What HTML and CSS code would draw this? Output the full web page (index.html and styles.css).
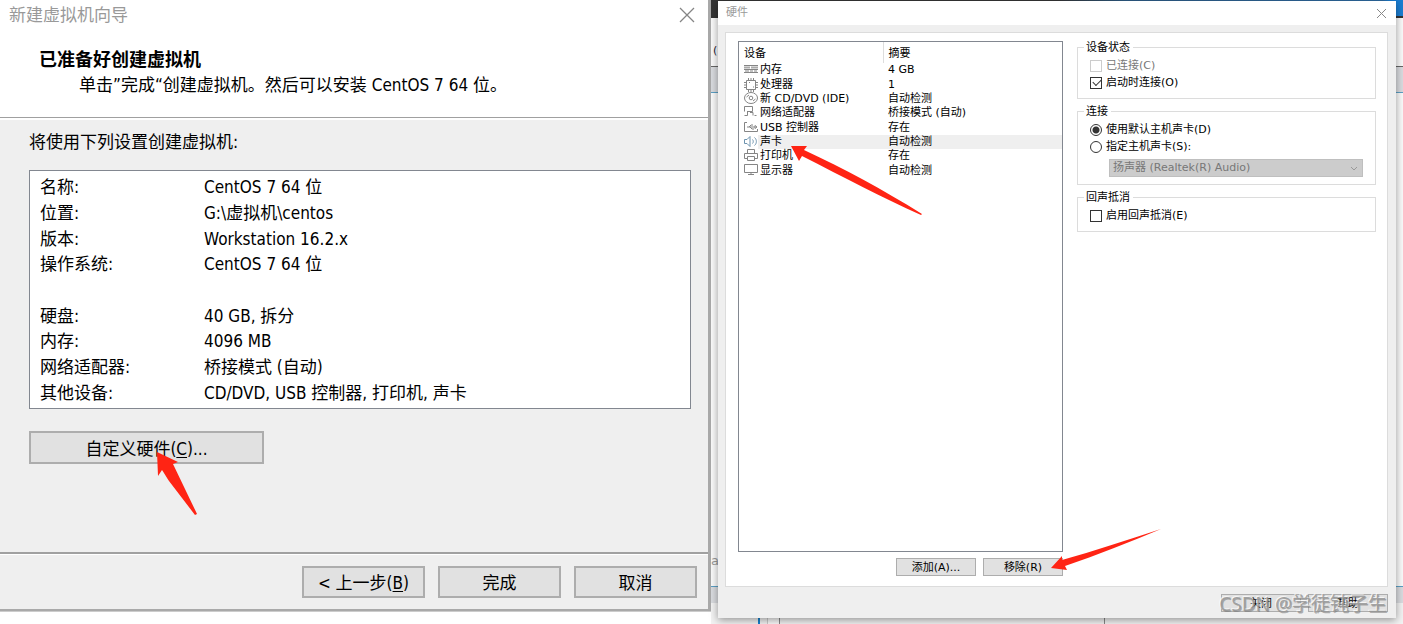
FILE: index.html
```html
<!DOCTYPE html>
<html lang="zh-CN">
<head>
<meta charset="utf-8">
<title>新建虚拟机向导</title>
<link rel="stylesheet" href="styles.css">
</head>
<body>
<main class="desktop">
  <section class="wizard">
    <header class="wizard-head">
      <div class="wizard-bar">
        <span>新建虚拟机向导</span>
        <button class="close" aria-label="关闭向导"><svg width="16" height="16" viewBox="0 0 16 16"><path d="M1 1L15 15M15 1L1 15" stroke="#858585" stroke-width="1.3"/></svg></button>
      </div>
      <h1 class="wizard-title">已准备好创建虚拟机</h1>
      <p class="wizard-sub">单击”完成“创建虚拟机。然后可以安装 CentOS 7 64 位。</p>
    </header>
    <div class="wizard-body">
      <p class="wizard-lead">将使用下列设置创建虚拟机:</p>
      <dl class="summary">
        <div class="pair"><dt>名称:</dt><dd>CentOS 7 64 位</dd></div>
        <div class="pair"><dt>位置:</dt><dd>G:\虚拟机\centos</dd></div>
        <div class="pair"><dt>版本:</dt><dd>Workstation 16.2.x</dd></div>
        <div class="pair"><dt>操作系统:</dt><dd>CentOS 7 64 位</dd></div>
        <div class="pair"></div>
        <div class="pair"><dt>硬盘:</dt><dd>40 GB, 拆分</dd></div>
        <div class="pair"><dt>内存:</dt><dd>4096 MB</dd></div>
        <div class="pair"><dt>网络适配器:</dt><dd>桥接模式 (自动)</dd></div>
        <div class="pair"><dt>其他设备:</dt><dd>CD/DVD, USB 控制器, 打印机, 声卡</dd></div>
      </dl>
      <div class="pointed">
        <button class="btn btn-custom">自定义硬件(<u>C</u>)...</button>
        <svg class="arrow arrow-custom" width="42" height="66" viewBox="0 0 42 66"><path d="M1 1L22 11L17 13C25 30 33 46 41 63L39 64L13 30C11 27 8 22 6 19L2 25Z" fill="#ff2414"/></svg>
      </div>
    </div>
    <footer class="wizard-foot">
      <button class="btn">&lt; 上一步(<u>B</u>)</button>
      <button class="btn">完成</button>
      <button class="btn">取消</button>
    </footer>
  </section>

  <div class="stage">
    <div class="backdrop" aria-hidden="true">
      <div class="strip-dark"></div>
      <div class="strip-page">(</div>
      <div class="strip-tool"></div>
      <div class="strip-blank">a</div>
      <div class="strip-tool strip-low"></div>
      <div class="strip-end"><i class="rule-blue"></i><i class="rule-pale"></i><i class="rule-dark"></i><i class="rule-mid"></i></div>
    </div>
    <section class="hardware">
      <header class="hw-bar">
        <span>硬件</span>
        <button class="close" aria-label="关闭硬件"><svg width="11" height="11" viewBox="0 0 11 11"><path d="M1 1L10 10M10 1L1 10" stroke="#888"/></svg></button>
      </header>
      <div class="panel">
        <div class="left">
          <div class="devices">
            <table>
              <thead><tr><th>设备</th><th class="split">摘要</th></tr></thead>
              <tbody>
                <tr><td><svg viewBox="0 0 14 14"><path d="M0 2.500h14M0 6.500h14M0 9.500h14"/><path d="M0 4.500h6m1 0h7" stroke-width="2" stroke="#aaa"/><path d="M1 8h4m1 0h3m1 0h3"/></svg><span>内存</span></td><td>4 GB</td></tr>
                <tr><td><svg viewBox="0 0 14 14"><path d="M2.500 2.500h9v9h-9zM4.500 0v2m2.500-2v2m2.500-2v2M4.500 12v2m2.500-2v2m2.500-2v2M0 4.500h2M0 7h2M0 9.500h2M12 4.500h2M12 7h2M12 9.500h2M5 4.500h1M9 9h1"/></svg><span>处理器</span></td><td>1</td></tr>
                <tr><td><svg viewBox="0 0 14 14"><ellipse cx="7" cy="6" rx="6.500" ry="5.500"/><circle cx="7" cy="6" r="1.800"/><path d="M2.500 5L5 3M9 9L11.500 7"/></svg><span>新 CD/DVD (IDE)</span></td><td>自动检测</td></tr>
                <tr><td><svg viewBox="0 0 14 14"><path d="M.5 5.500v-5h8v5M3 5.500h5.500M.5 9.500h3M3.500 6v3.500M6 6.500h3v3M10.500 9.500h2"/></svg><span>网络适配器</span></td><td>桥接模式 (自动)</td></tr>
                <tr><td><svg viewBox="0 0 14 14"><path d="M3 1.500H.5v9h13V8M3 6h8M5 6l2-2h2M6 6l2 2h2M11 4.500l2 1.500-2 1.500z"/></svg><span>USB 控制器</span></td><td>存在</td></tr>
                <tr class="picked"><td><svg class="sound" viewBox="0 0 14 14"><path d="M.5 4.500h2.500l3-3v10l-3-3H.5zM8.500 4.500c1 1 1 3 0 4M10.500 2.500c2.500 2 2.500 6 0 8"/></svg><span>声卡</span></td><td>自动检测</td></tr>
                <tr><td><svg viewBox="0 0 14 14"><path d="M3.500 4V.5h7V4M3.500 9.500H.5v-5h13v5h-3M3.500 7.500h7v4h-7z"/></svg><span>打印机</span></td><td>存在</td></tr>
                <tr><td><svg viewBox="0 0 14 14"><path d="M.5.5h13v8H.5zM4 10.500h6M7 9v1"/></svg><span>显示器</span></td><td>自动检测</td></tr>
              </tbody>
            </table>
            <svg class="arrow arrow-sound" width="134" height="72" viewBox="0 0 134 72"><path d="M1 1L17 1L14 5C55 24 92 44 132 69L131 70C91 52 55 33 12 11L9 16Z" fill="#ff2414"/></svg>
          </div>
          <div class="actions pointed">
            <button class="btn-s">添加(A)...</button>
            <button class="btn-s">移除(R)</button>
            <svg class="arrow arrow-remove" width="112" height="44" viewBox="0 0 112 44"><path d="M1 40L12 28L12 32C44 23 77 12 111 1C80 14 47 27 15 38L17 42Z" fill="#ff2414"/></svg>
          </div>
        </div>
        <form class="groups">
          <fieldset>
            <legend>设备状态</legend>
            <label class="off"><input type="checkbox" disabled>已连接(C)</label>
            <label><input type="checkbox" checked>启动时连接(O)</label>
          </fieldset>
          <fieldset>
            <legend>连接</legend>
            <label><input type="radio" name="card" checked>使用默认主机声卡(D)</label>
            <label><input type="radio" name="card">指定主机声卡(S):</label>
            <div class="pick">
              <select disabled aria-label="主机声卡"><option>扬声器 (Realtek(R) Audio)</option></select>
              <svg width="8" height="5" viewBox="0 0 8 5"><path d="M1 1l3 3 3-3" fill="none" stroke="#999"/></svg>
            </div>
          </fieldset>
          <fieldset>
            <legend>回声抵消</legend>
            <label><input type="checkbox">启用回声抵消(E)</label>
          </fieldset>
        </form>
      </div>
      <footer class="hw-foot">
        <button class="btn-s">关闭</button>
        <button class="btn-s">帮助</button>
        <span class="credit">CSDN @学徒钝子生</span>
      </footer>
    </section>
  </div>
</main>
</body>
</html>
```

FILE: styles.css
```css
* { box-sizing: border-box; }
body { margin: 0; background: #fff; color: #000; overflow: hidden; }
h1, p, dl, dd { margin: 0; }
button, select, input { font: inherit; color: inherit; margin: 0; }

.desktop {
  display: grid;
  grid-template-columns: 711fr 692fr;
  align-items: start;
  min-height: 100vh;
}

/* wizard window */
.wizard {
  font: 17px/26px "DejaVu Sans Condensed", "Noto Sans", "Noto Sans CJK SC", sans-serif;
  background: #efefef;
  border-right: 3px solid #a9a9a9;
  border-bottom: 2px solid #a9a9a9;
  box-shadow: 0 1px 0 #ccc;
}
.wizard-head {
  background: #fff;
  border-bottom: 1px solid #a0a0a0;
  box-shadow: 0 2px 0 #fff;
  padding-bottom: 19px;
}
.wizard-bar {
  display: flex;
  justify-content: space-between;
  align-items: center;
  height: 30px;
  padding: 0 13px 0 9px;
  color: #999;
}
.close { display: flex; border: 0; padding: 0; background: none; }
.wizard-title { margin: 17px 39px 0; font-size: 18px; line-height: 26px; font-weight: 700; }
.wizard-sub { padding: 0 79px; line-height: 25px; white-space: nowrap; }
.wizard-body { padding: 11px 17px 88px 29px; }
.wizard-lead { margin-bottom: 15px; }
.summary {
  display: flex;
  flex-direction: column;
  min-height: 239px;
  padding: 4px 10px 2px;
  background: #fff;
  border: 1px solid #828790;
}
.pair { flex: 1 1 0; display: grid; grid-template-columns: 164px 1fr; align-items: center; line-height: 25px; }
.pointed { position: relative; }
.btn {
  height: 32px;
  padding: 2px 0 0;
  background: #e1e1e1;
  border: 2px solid #adadad;
  line-height: 26px;
}
.btn u { text-underline-offset: 2px; }
.btn-custom { display: block; width: 235px; height: 33px; margin-top: 22px; }
.wizard-foot {
  display: flex;
  justify-content: flex-end;
  gap: 13px;
  padding: 12px 11px 11px;
  border-top: 2px solid #a0a0a0;
  box-shadow: inset 0 1px 0 #fff;
}
.wizard-foot .btn { width: 123px; }

.arrow { position: absolute; pointer-events: none; }
.arrow-custom { left: 127px; top: 20px; }
.arrow-sound { left: 51px; top: 103px; }
.arrow-remove { right: -99px; bottom: 4px; }

/* desktop behind the hardware window */
.stage {
  position: relative;
  padding: 1px 7px 6px;
  font: 11px/14px "DejaVu Sans", "Noto Sans CJK SC", sans-serif;
}
.backdrop { position: absolute; inset: 0; display: flex; flex-direction: column; background: #fafafa; color: #555; overflow: hidden; }
.strip-dark { height: 18px; background: linear-gradient(90deg, #353535 50%, #2d5c86 60%, #2d6ba3 97%, #1b7ed2 98%); border-bottom: 2px solid #333; }
.strip-page { height: 48px; padding: 26px 0 0 2px; color: #223; }
.strip-tool { height: 27px; background: #d9dbdf; border-top: 1px solid #666; border-bottom: 1px solid #5b9fc4; }
.strip-blank { flex: 1; display: flex; align-items: flex-end; padding-bottom: 18px; font-size: 13px; color: #999; }
.strip-low { height: 17px; border-top-color: #5b9fc4; border-bottom: 0; }
.strip-end { display: grid; grid-template-columns: 49px 8px 12px 325px 1fr; height: 21px; background: #f2f2f2; }
.strip-end i { border-right: 1px solid #888; }
.strip-end .rule-blue { border-right: 2px solid #1683d0; }
.strip-end .rule-pale { border-color: #ccc; }
.strip-end .rule-dark { background: #fafafa; }

/* hardware window */
.hardware { position: relative; background: #efefef; box-shadow: 0 2px 8px rgba(0, 0, 0, .4); }
.hw-bar {
  display: flex;
  justify-content: space-between;
  align-items: center;
  height: 24px;
  padding: 0 9px 0 8px;
  background: #fff;
  color: #999;
}
.panel {
  display: grid;
  grid-template-columns: 326fr 298fr;
  gap: 14px;
  margin: 7px 8px 0 7px;
  padding: 8px 11px 10px 12px;
  background: #fff;
  border: 1px solid #dcdcdc;
}
.devices { position: relative; min-height: 511px; border: 1px solid #828790; }
.devices table { width: 100%; height: 136px; border-collapse: collapse; table-layout: fixed; }
.devices th { height: 21px; padding: 2px 5px 0; text-align: left; font-weight: 400; }
.devices th:first-child { width: 144px; }
.devices .split { border-left: 1px solid #ddd; }
.devices td { padding: 0 5px; line-height: 14px; white-space: nowrap; }
.devices td:first-child { padding-right: 0; }
.devices td svg { width: 14px; height: 14px; margin-right: 2px; vertical-align: top; fill: none; stroke: #858585; }
.devices td .sound { stroke: #6d93ae; }
.picked { background: linear-gradient(90deg, #fff 19px, #efefef 19px); }
.actions { display: flex; justify-content: flex-end; gap: 7px; margin-top: 6px; }
.btn-s {
  width: 80px;
  height: 18px;
  padding: 2px 0 0;
  background: #e1e1e1;
  border: 1px solid #adadad;
  line-height: 14px;
}
.groups { display: flex; flex-direction: column; gap: 6px; }
fieldset { margin: 0; padding: 3px 12px 7px; border: 1px solid #dcdcdc; min-width: 0; }
legend { margin-left: -6px; padding: 0 3px 0 2px; line-height: 13px; }
fieldset label { display: flex; align-items: center; gap: 4px; height: 17px; }
.off { color: #777; }
input { appearance: none; width: 12px; height: 12px; border: 1px solid #333; background: #fff; }
input[type="radio"] { border-radius: 50%; }
input[type="radio"]:checked { background: radial-gradient(circle, #333 3px, #fff 4px); }
input[type="checkbox"]:checked { position: relative; }
input[type="checkbox"]:checked::after {
  content: "";
  position: absolute;
  left: 2px;
  top: 1px;
  width: 7px;
  height: 4px;
  border: solid #333;
  border-width: 0 0 1px 1px;
  transform: rotate(-45deg);
}
input:disabled { border-color: #ccc; }
.pick { position: relative; margin: 4px 0 0 19px; width: 254px; max-width: 100%; }
.pick select {
  appearance: none;
  display: block;
  width: 100%;
  height: 18px;
  padding: 0 3px;
  background: #ccc;
  border: 1px solid #bfbfbf;
  border-radius: 0;
  color: #777;
  opacity: 1;
  line-height: 14px;
}
.pick svg { position: absolute; right: 5px; top: 7px; }
.hw-foot { position: relative; display: flex; justify-content: flex-end; gap: 7px; padding: 7px 8px 6px; }
.credit {
  position: absolute;
  right: 9px;
  top: 4px;
  font: 19px/26px "Noto Sans", "Noto Sans CJK SC", sans-serif;
  color: rgba(150, 150, 150, .85);
  text-shadow: -1px -1px 0 rgba(255, 255, 255, .7), 1px 1px 0 rgba(110, 110, 110, .5);
  white-space: nowrap;
}
```
